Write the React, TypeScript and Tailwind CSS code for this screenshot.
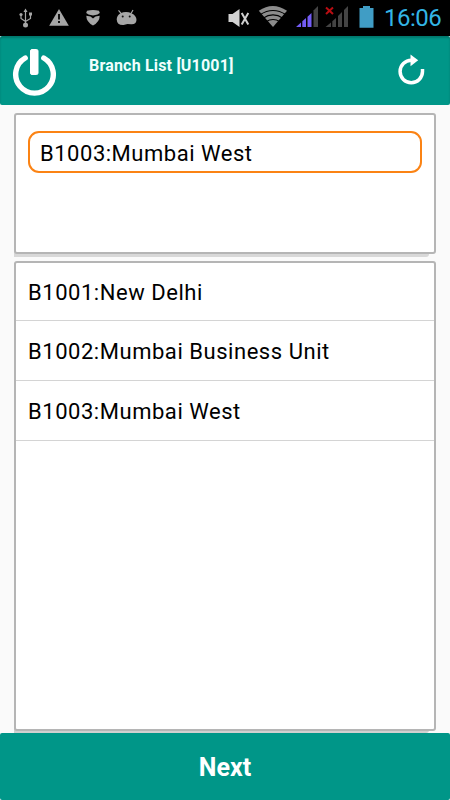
import React from 'react';

interface Branch {
  code: string;
  name: string;
}

const branches: Branch[] = [
  { code: 'B1001', name: 'New Delhi' },
  { code: 'B1002', name: 'Mumbai Business Unit' },
  { code: 'B1003', name: 'Mumbai West' },
];

const label = (branch: Branch) => `${branch.code}:${branch.name}`;

function NotificationIcons() {
  return (
    <svg width="120" height="20" viewBox="18 8 120 20" fill="#a6a6a6">
      {/* usb */}
      <g stroke="#a6a6a6" strokeWidth="1.2" fill="none">
        <path d="M25.5 11v14M21 15v3.5l4.5 3M30.5 14.5v4l-5 3" />
      </g>
      <path d="M25.5 8.5l2 3.5h-4z" />
      <circle cx="25.5" cy="25" r="2.5" />
      <circle cx="21" cy="14.5" r="1.6" />
      <path d="M29 12.5h3v3h-3z" />
      {/* warning */}
      <path d="M59 9L68.8 25.8H49.2z" />
      <path d="M58 14h2v5.5h-2zM58 21h2v2h-2z" fill="#111" />
      {/* masked face */}
      <path d="M87 10.700q6-1.500 12 0l.8 2.300-2.300 1.600-4.500 1-4.500-1-2.300-1.600z" />
      <path d="M86.300 15.800l4.200.8 2.500 2 2.500-2 4.200-.8q0 6.200-6.700 9.700-6.700-3.500-6.700-9.700z" />
      {/* android head */}
      <path d="M118.500 10.300l3 3.500M133 10l-2 3.500" stroke="#a6a6a6" strokeWidth="1.2" />
      <path d="M120.500 13.200q5.500-2.200 11 0 5 2.500 5 6.800-.5 4.800-5.500 4.300l-3.500-.3-4 1q-6.500.3-6.800-5.500 0-4 3.800-6.300z" />
      <circle cx="122.700" cy="16.500" r="1" fill="#111" />
      <circle cx="129.700" cy="16.500" r="1" fill="#111" />
    </svg>
  );
}

function SystemIcons() {
  return (
    <svg width="148" height="28" viewBox="228 4 148 28">
      {/* muted speaker */}
      <path d="M228.500 14h4l7-5v18l-7-5h-4z" fill="#d2d2d2" />
      <path d="M241.700 13l6.600 11.500M248.300 13l-6.600 11.500" stroke="#cfcfcf" strokeWidth="2" />
      {/* wifi */}
      <path d="M258.800 10.800q14-9.600 28.200 0L273 27z" fill="#8c8c8c" />
      <g stroke="#000" strokeWidth="1.100" fill="none">
        <path d="M260 14.700q13-8.500 26 0" />
        <path d="M263 18.200q10-6.600 20 0" />
        <path d="M266 21.700q7-4.400 14 0" />
      </g>
      {/* sim 1 */}
      <path d="M296 27l5-4.500V27zM302.300 21.300l3.700-3.400V27h-3.700zM307.500 16.700l4-3.700v14h-4z" fill="#735cf5" />
      <path d="M313.500 10.500l4.500-4.500v21h-4.500z" fill="#444" />
      {/* sim 2 */}
      <path d="M325.500 27l5.500-4.500V27zM332.300 21.300l3.700-3.400V27h-3.700zM338 15.900l4-3.900v15h-4zM344 10l4-4v21h-4z" fill="#444" />
      <path d="M326 7.500l7 6.500M333 7.500l-7 6.500" stroke="#b90d12" strokeWidth="2" />
      {/* battery */}
      <path d="M359.500 8h3.500V6h7v2h3.500v19.700h-14z" fill="#409dc5" />
    </svg>
  );
}

function StatusBar() {
  return (
    <div className="flex h-9 shrink-0 items-center justify-between bg-black pl-[18px] pr-[9px]">
      <NotificationIcons />
      <div className="flex items-center">
        <SystemIcons />
        <span className="ml-2 w-[57px] whitespace-nowrap pt-px text-[24px] leading-[35px] tracking-[-0.5px] text-[#33b5e5]">16:06</span>
      </div>
    </div>
  );
}

function Header() {
  return (
    <div className="flex h-[69px] shrink-0 items-start rounded-[2px] bg-[#009688] pl-3 pr-[25px] shadow-[inset_0_2px_2px_rgba(0,0,0,0.2)]">
      <button className="mt-[12px]">
        <svg width="46" height="50" viewBox="12 48 46 50" fill="none" stroke="#fff">
          <path d="M25.200 58a18.800 18.800 0 1 0 18.600 0" strokeWidth="5.400" strokeLinecap="round" />
          <rect x="30.500" y="49.500" width="7.500" height="25" rx="1.500" fill="#fff" strokeWidth="1" />
        </svg>
      </button>
      <h1 className="ml-[31px] mt-[18px] text-[16px] font-bold leading-[24px] tracking-[0.19px] text-[#f0fffd]">Branch List [U1001]</h1>
      <button className="ml-auto mt-[17px]">
        <svg width="28" height="34" viewBox="397 53 28 34" fill="none">
          <path d="M412.500 60.300h-1.200a11.200 11.200 0 1 0 11.200 11.200v-2.500" stroke="#fff" strokeWidth="3.500" />
          <path d="M410.500 54.500l7.700 5.700-7.700 6z" fill="#fff" />
        </svg>
      </button>
    </div>
  );
}

export default function App() {
  const selected = branches[2];

  return (
    <div className="flex h-[800px] w-[450px] flex-col overflow-hidden bg-[#fafafa] font-['Roboto','Liberation_Sans',sans-serif] text-black">
      <StatusBar />
      <Header />

      <div className="mx-3.5 mt-[8px] h-[141px] shrink-0 rounded-[3px] border-2 border-[#b5b5b5] bg-white px-3 pt-4 shadow-[-7px_3px_0_#d8d8d8] [clip-path:inset(0_0_-3px_0)]">
        <div className="flex h-[42px] items-center rounded-[11px] border-2 border-[#fb8314] px-2.5 pt-[3px] text-[22px] tracking-[0.52px]">
          {label(selected)}
        </div>
      </div>

      <div className="mx-3.5 mt-[7px] h-[470px] shrink-0 rounded-[3px] border-2 border-[#b5b5b5] bg-white shadow-[-7px_2px_0_#d0d0d0] [clip-path:inset(0_0_-2px_0)]">
        {branches.map((branch) => (
          <div key={branch.code} className="flex h-[60px] items-center border-b border-[#d4d4d4] px-3 pt-[2px] text-[22px] tracking-[0.54px] first:h-[58px]">
            {label(branch)}
          </div>
        ))}
      </div>

      <button className="mt-auto h-[67px] shrink-0 rounded-[2px] bg-[#009688] pt-[2px] text-[25px] font-bold text-white">Next</button>
    </div>
  );
}
